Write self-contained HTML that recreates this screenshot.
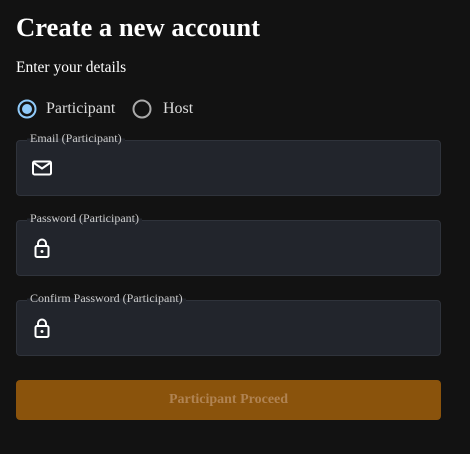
<!DOCTYPE html>
<html><head><style>
body{margin:0;width:470px;height:454px;background:#121212;font-family:"Liberation Serif",serif;color:#fff;position:relative;overflow:hidden}
.a{position:absolute}
h1{position:absolute;left:16px;top:12px;margin:0;font-size:26.6px;font-weight:bold;white-space:nowrap}
.sub{left:16px;top:59px;font-size:15.5px}
.f{position:absolute;left:16px;width:423px;height:54px;background:#22252c;border:1px solid #2f333b;border-radius:4px}
.lb{position:absolute;left:10px;top:-9px;font-size:12px;color:#ccc;padding:0 3px;line-height:13px;background:linear-gradient(#121212 50%,#22252c 50%);white-space:nowrap}
.ic{position:absolute;left:14px;top:16px}
.btn{left:16px;top:380px;width:425px;height:40px;background:#8a530c;border-radius:4px;text-align:center;line-height:40px;font-size:14px;font-weight:bold;color:#b08352}
</style></head><body>
<h1>Create a new account</h1>
<div class="a sub">Enter your details</div>
<svg class="a" style="left:16px;top:98px" width="22" height="22"><circle cx="11" cy="11" r="8.5" fill="none" stroke="#90caf9" stroke-width="2"/><circle cx="11" cy="11" r="5" fill="#90caf9"/></svg>
<div class="a" style="left:46px;top:100px;font-size:16px;color:#ddd">Participant</div>
<svg class="a" style="left:131px;top:98px" width="22" height="22"><circle cx="11" cy="11" r="8.5" fill="none" stroke="#aaa" stroke-width="2"/></svg>
<div class="a" style="left:163px;top:100px;font-size:16px;color:#ddd">Host</div>

<div class="f" style="top:140px"><div class="lb">Email (Participant)</div>
<svg class="ic" width="22" height="22" viewBox="0 0 22 22"><rect x="2" y="4.5" width="18" height="13" rx="1.5" fill="none" stroke="#fff" stroke-width="2"/><path d="M3 6l8 5.5 8-5.5" fill="none" stroke="#fff" stroke-width="2"/></svg></div>

<div class="f" style="top:220px"><div class="lb">Password (Participant)</div>
<svg class="ic" width="22" height="22" viewBox="0 0 22 22"><path d="M7 9V6.5a4 4 0 0 1 8 0V9" fill="none" stroke="#fff" stroke-width="2"/><rect x="4.5" y="9" width="13" height="11" rx="1.5" fill="none" stroke="#fff" stroke-width="2"/><circle cx="11" cy="14.5" r="1.5" fill="#fff"/></svg></div>

<div class="f" style="top:300px"><div class="lb">Confirm Password (Participant)</div>
<svg class="ic" width="22" height="22" viewBox="0 0 22 22"><path d="M7 9V6.5a4 4 0 0 1 8 0V9" fill="none" stroke="#fff" stroke-width="2"/><rect x="4.5" y="9" width="13" height="11" rx="1.5" fill="none" stroke="#fff" stroke-width="2"/><circle cx="11" cy="14.5" r="1.5" fill="#fff"/></svg></div>

<div class="a btn">Participant Proceed</div>
</body></html>
